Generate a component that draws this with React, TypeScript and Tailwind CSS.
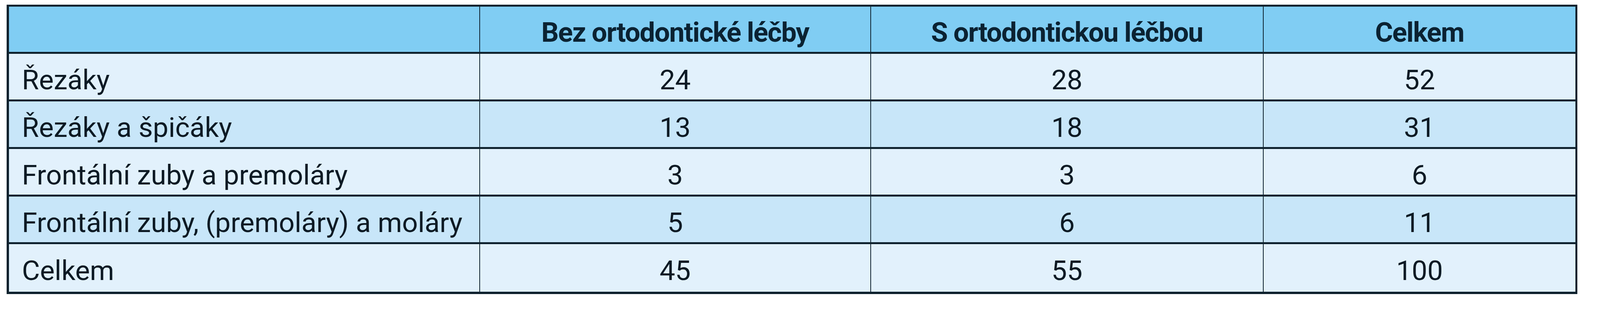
import React from 'react';

// Rows of the table: label + counts (without / with orthodontic treatment / total)
const ROWS = [
  { label: 'Řezáky', bez: 24, s: 28, total: 52 },
  { label: 'Řezáky a špičáky', bez: 13, s: 18, total: 31 },
  { label: 'Frontální zuby a premoláry', bez: 3, s: 3, total: 6 },
  { label: 'Frontální zuby, (premoláry) a moláry', bez: 5, s: 6, total: 11 },
  { label: 'Celkem', bez: 45, s: 55, total: 100 },
];

const COLS = 'grid grid-cols-[1250fr_1037fr_1042fr_827fr]';

export default function App() {
  return (
    <div className="w-full h-[800px] bg-white pt-[12px] pl-[17px] pr-[58px]">
      <div
        className="border-[6px] border-t-[5px] border-r-[5px] border-[#0f222e] text-[#0d1a24]"
        style={{ fontFamily: 'Roboto, "Liberation Sans", sans-serif' }}
      >
        {/* Header */}
        <div className={`${COLS} h-[121px] bg-[#80cdf3] border-b-[5px] border-[#0f222e]`}>
          <div className="border-r-2 border-[#0f222e]" />
          <div className="flex items-center justify-center pt-[14px] border-r-2 border-[#0f222e] text-[70px] font-bold tracking-[-1.6px] text-[#0b2232]">
            Bez ortodontické léčby
          </div>
          <div className="flex items-center justify-center pt-[14px] border-r-2 border-[#0f222e] text-[70px] font-bold tracking-[-1.6px] text-[#0b2232]">
            S ortodontickou léčbou
          </div>
          <div className="flex items-center justify-center pt-[14px] text-[70px] font-bold tracking-[-1.6px] text-[#0b2232]">
            Celkem
          </div>
        </div>

        {/* Body */}
        {ROWS.map((row, i) => (
          <div
            key={row.label + i}
            className={`${COLS} h-[122px] ${i % 2 === 0 ? 'bg-[#e2f1fc]' : 'bg-[#c8e6f9]'} ${
              i < ROWS.length - 1 ? 'border-b-[5px] border-[#0f222e]' : ''
            }`}
          >
            <div className="flex items-center pl-[33px] pt-[14px] border-r-2 border-[#0f222e] text-[71px] whitespace-nowrap">
              {row.label}
            </div>
            <div className="flex items-center justify-center pt-[14px] border-r-2 border-[#0f222e] text-[71px]">
              {row.bez}
            </div>
            <div className="flex items-center justify-center pt-[14px] border-r-2 border-[#0f222e] text-[71px]">
              {row.s}
            </div>
            <div className="flex items-center justify-center pt-[14px] text-[71px]">{row.total}</div>
          </div>
        ))}
      </div>
    </div>
  );
}
